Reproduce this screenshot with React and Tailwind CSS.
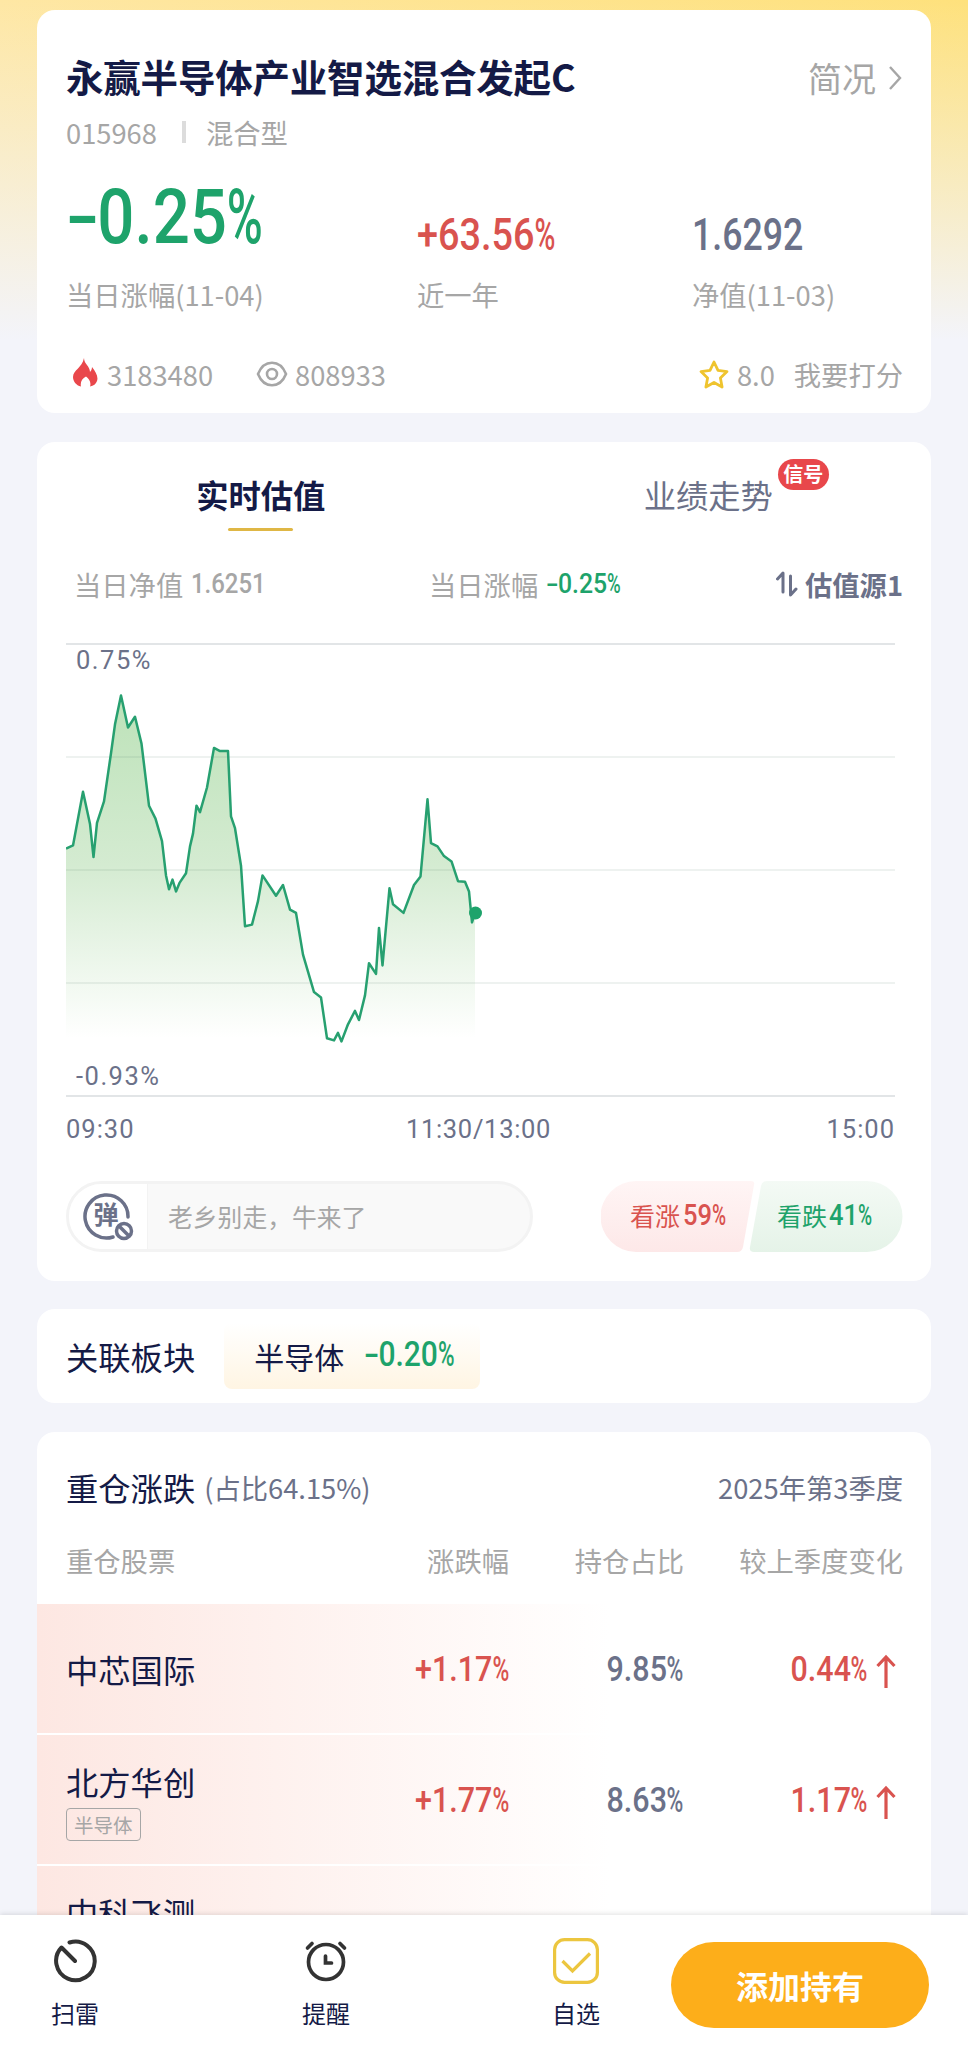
const line = [
  [0, 205.6], [7, 202.4], [17, 148.8], [24, 180.9], [27.5, 214.1], [31, 179.9], [38, 158.4], [45, 110.2], [49, 81.3],
  [55, 52.4], [62, 84.5], [69, 73.8], [75.5, 100.6], [83, 162.7], [89.5, 175.6], [96, 198.1], [100, 232.4],
  [103, 246.3], [106.5, 236.6], [110, 248.4], [113.5, 239.9], [120, 230.2], [124, 203.4], [127, 190.6],
  [130.5, 162.7], [134, 169.1], [141, 144.5], [148, 104.9], [154, 108.1], [162, 108.1], [165, 173.4], [169, 185.2],
  [175, 222.7], [179, 283.2], [186, 281.6], [192, 258.1], [196.5, 232.4], [210, 252.7], [217, 242], [224, 266.6],
  [230, 269.9], [237, 311.6], [248, 349.1], [255, 354.5], [261, 395.2], [268, 397.4], [272, 389.9], [275.5, 398.4],
  [282, 381.3], [289, 367.9], [293, 377], [299, 352.4], [303, 320.2], [310, 330.9], [313, 284.9], [316.5, 322.4],
  [323.5, 245.2], [327, 261.3], [337.5, 269.9], [348, 242], [354.5, 233.4], [361.5, 156.3], [365, 200.2],
  [371.5, 203.4], [378, 213.1], [385.5, 218.4], [392, 238.2], [399, 238.8], [403, 248.4], [406, 279.5], [409, 269.9],
];

const points = line.map(p => p.join(',')).join(' ');

const stocks = [
  { name: '中芯国际', change: '+1.17%', share: '9.85%', diff: '0.44%' },
  { name: '北方华创', tag: '半导体', change: '+1.77%', share: '8.63%', diff: '1.17%' },
  { name: '中科飞测' },
];

// condensed figures: wide minus sign, narrow percent sign
function Num({ className = '', children }) {
  const minus = children.startsWith('-');
  const percent = children.endsWith('%');
  return (
    <span className={`inline-block whitespace-nowrap font-['Roboto','Noto_Sans_CJK_SC',sans-serif] font-medium ${className}`}>
      {minus && <span className="mr-[0.14em] inline-block origin-left scale-x-150">-</span>}
      {children.slice(minus ? 1 : 0, percent ? -1 : undefined)}
      {percent && <span className="mr-[-0.18em] inline-block origin-left scale-x-75">%</span>}
    </span>
  );
}

function ArrowUp() {
  return (
    <svg width="20" height="34" viewBox="0 0 20 34" fill="none" stroke="#d9534f" strokeWidth="3.2">
      <path d="M10 34V3M1.500 12L10 3L18.500 12" />
    </svg>
  );
}

function Summary() {
  return (
    <section className="h-[403px] rounded-[18px] bg-white pt-[39px] pr-7 pl-[29px]">
      <div className="flex h-[58px] items-center justify-between">
        <h1 className="pb-1 text-[37.5px] font-bold tracking-[-0.2px] text-[#141a46]">永赢半导体产业智选混合发起C</h1>
        <div className="flex items-center gap-3 pb-px text-[34px] text-[#a6a6a6]">
          简况
          <svg width="15" height="26" viewBox="0 0 15 26" fill="none" stroke="currentColor" strokeWidth="2.4">
            <path d="M2 2l10 11L2 24" />
          </svg>
        </div>
      </div>
      <div className="flex h-[50px] items-center text-[27.3px] text-[#a6a6a6]">
        015968
        <span className="mr-5 ml-[25px] h-[22px] w-1 bg-[#dcdcdc]" />
        混合型
      </div>
      <div className="grid grid-cols-[351px_275px_1fr]">
        <div>
          <div className="flex h-[112px] items-end">
            <Num className="mb-[3px] origin-left scale-x-[0.86] text-[76px] leading-[98px] text-[#1ea36b]">-0.25%</Num>
          </div>
          <div className="text-[27.3px] leading-[50px] text-[#a6a6a6]">当日涨幅(11-04)</div>
        </div>
        <div>
          <div className="flex h-[112px] items-end">
            <Num className="origin-left scale-x-[0.87] text-[43.5px] leading-[66px] text-[#d9534f]">+63.56%</Num>
          </div>
          <div className="text-[27.3px] leading-[50px] text-[#a6a6a6]">近一年</div>
        </div>
        <div>
          <div className="flex h-[112px] items-end">
            <Num className="origin-left scale-x-[0.82] text-[43.5px] leading-[66px] text-[#6b7189]">1.6292</Num>
          </div>
          <div className="text-[27.3px] leading-[50px] text-[#a6a6a6]">净值(11-03)</div>
        </div>
      </div>
      <div className="mt-[35px] flex h-10 items-center text-[27.3px] text-[#a6a6a6]">
        <svg className="mr-[9px] mb-1 ml-[7px]" width="25" height="29" viewBox="0 0 25 29" fill="#e9474b">
          <path d="M11 0c0 6 6 8 6 14 1-1 2-3 2-5 4 5 6.500 10 5 14-1 3-3.500 5-7 5.500 1.500-4-1-8-4-10-4 2-6 6-5 10C3 27.500 0 23 0 19 0 12 9 10 11 0z" />
        </svg>
        <span>3183480</span>
        <svg className="mr-[7px] ml-[43px]" width="32" height="26" viewBox="0 0 32 26" fill="none" stroke="#a6a6a6" strokeWidth="2.6">
          <path d="M2 13C8-2 24-2 30 13C24 28 8 28 2 13z" />
          <circle cx="16" cy="13" r="5" />
        </svg>
        <span>808933</span>
        <svg className="mr-2 ml-auto" width="30" height="29" viewBox="0 0 30 29" fill="none" stroke="#efc42e" strokeWidth="2.8" strokeLinejoin="round">
          <path d="M15 2l4 8.400 9 1.200-6.600 6.300 1.700 9.100L15 22.500 6.900 27l1.700-9.100L2 11.600l9-1.200z" />
        </svg>
        <span>8.0</span>
        <span className="ml-[19px]">我要打分</span>
      </div>
    </section>
  );
}

function Chart() {
  return (
    <svg className="block" width="845" height="454" viewBox="0 0 845 454" fill="none">
      <defs>
        <linearGradient id="area" x1="0" y1="48" x2="0" y2="395" gradientUnits="userSpaceOnUse">
          <stop offset="0" stopColor="#bce2b8" />
          <stop offset="0.500" stopColor="#d4ebd1" />
          <stop offset="1" stopColor="#d4ebd1" stopOpacity="0" />
        </linearGradient>
      </defs>
      <polygon points={`0,395 ${points} 409,395`} fill="url(#area)" />
      <path d="M0 1H829M0 453H829" stroke="#e2e5e7" strokeWidth="2" />
      <path d="M0 114H829M0 227H829M0 340H829" stroke="#5a8070" strokeOpacity="0.1" strokeWidth="2" />
      <polyline points={points} stroke="#27a070" strokeWidth="2.500" strokeLinejoin="round" />
      <circle cx="409.500" cy="270" r="6.500" fill="#1ea36b" />
      <g fill="#6b7189" fontFamily="Roboto, sans-serif" fontSize="25.500" letterSpacing="1.500">
        <text x="10" y="26">0.75%</text>
        <text x="10" y="442">-0.93%</text>
      </g>
    </svg>
  );
}

function Valuation() {
  return (
    <section className="mt-[29px] h-[839px] rounded-[18px] bg-white pt-[22px] pr-7 pl-[29px]">
      <div className="grid h-[75px] grid-cols-2 text-[32.3px]">
        <div className="flex flex-col items-center pr-[29px]">
          <span className="leading-[60px] font-bold text-[#141a46]">实时估值</span>
          <span className="mt-[4px] h-[3px] w-[65px] shrink-0 rounded-full bg-[#dfb745]" />
        </div>
        <div className="flex justify-center pl-[29px] text-[#6b7189]">
          <div className="relative leading-[60px]">
            业绩走势
            <span className="absolute top-[-5px] left-[134px] h-[31px] w-[51px] rounded-full bg-[#e8474b] text-center text-[20px] leading-[30px] font-bold text-white">
              信号
            </span>
          </div>
        </div>
      </div>
      <div className="mt-[25px] flex h-10 items-center text-[27.3px] text-[#a6a6a6]">
        <div className="flex w-[363px] shrink-0 items-center pl-2">
          当日净值
          <Num className="ml-2 origin-left scale-x-[0.84] text-[28.5px]">1.6251</Num>
        </div>
        <div className="flex shrink-0 items-center">
          当日涨幅
          <Num className="ml-2 origin-left scale-x-[0.87] text-[28.5px] text-[#1ea36b]">-0.25%</Num>
        </div>
        <div className="ml-auto flex shrink-0 items-center gap-[7px] font-bold text-[#6b7189]">
          <svg width="22" height="28" viewBox="0 0 22 28" fill="none" stroke="currentColor" strokeWidth="3" strokeLinecap="round" strokeLinejoin="round">
            <path d="M1.500 9l5.500-6v19M14.500 6v19l5.500-6" />
          </svg>
          估值源1
        </div>
      </div>
      <div className="mt-[39px]">
        <Chart />
      </div>
      <div className="mt-[14px] flex h-9 w-[829px] items-center justify-between font-['Roboto',sans-serif] text-[25.5px] text-[#6b7189]">
        <span className="tracking-[1px]">09:30</span>
        <span className="mr-1 tracking-[0.7px]">11:30/13:00</span>
        <span className="tracking-[1px]">15:00</span>
      </div>
      <div className="mt-[34px] flex h-[71px] justify-between">
        <div className="flex w-[467px] overflow-hidden rounded-full border-[3px] border-[#f3f3f3] bg-[#f9f9f9]">
          <div className="flex w-[79px] items-center justify-center border-r border-[#f3f3f3] bg-white">
            <svg width="52" height="48" viewBox="0 0 52 48" fill="none" stroke="#6b7189" strokeWidth="3.500">
              <path d="M46 24A21.500 21.500 0 1 0 31 44" strokeLinecap="round" />
              <text x="24" y="31" textAnchor="middle" fill="#6b7189" stroke="none" fontSize="25" fontWeight="700" fontFamily="Noto Sans CJK SC">弹</text>
              <circle cx="42" cy="38" r="7.500" fill="#fff" />
              <path d="M37 33l10 10" />
            </svg>
          </div>
          <span className="pl-5 text-[24.8px] leading-[65px] text-[#a6a6a6]">老乡别走，牛来了</span>
        </div>
        <div className="relative flex w-[302px]">
          <svg className="absolute inset-0" width="302" height="71" viewBox="0 0 302 71">
            <defs>
              <linearGradient id="up" x1="0" y1="0" x2="0" y2="1">
                <stop offset="0" stopColor="#fff5f5" />
                <stop offset="1" stopColor="#fde8e8" />
              </linearGradient>
              <linearGradient id="down" x1="0" y1="0" x2="0" y2="1">
                <stop offset="0" stopColor="#f4faf5" />
                <stop offset="1" stopColor="#e5f3e8" />
              </linearGradient>
            </defs>
            <path d="M35 0H150Q154 0 153 4L142 66Q141 71 136 71H35A35.500 35.500 0 0 1 35 0z" fill="url(#up)" />
            <path d="M166 0H266A35.500 35.500 0 0 1 266 71H153Q148 71 149 66L160 5Q161 0 166 0z" fill="url(#down)" />
          </svg>
          <div className="relative flex h-[70px] items-center pl-[29px] text-[25px] text-[#d9534f]">
            看涨<Num className="mb-px ml-[3px] origin-left scale-x-[0.88] text-[29px]">59%</Num>
          </div>
          <div className="absolute left-[176px] flex h-[70px] items-center text-[25px] text-[#1ea36b]">
            看跌<Num className="mb-px ml-[2px] origin-left scale-x-[0.88] text-[29px]">41%</Num>
          </div>
        </div>
      </div>
    </section>
  );
}

function Sector() {
  return (
    <section className="mt-7 flex h-[94px] items-center rounded-[18px] bg-white px-[29px] text-[#141a46]">
      <span className="pt-px text-[32.3px]">关联板块</span>
      <div className="ml-[29px] flex h-[66px] w-[256px] items-center rounded-lg bg-gradient-to-b from-white to-[#fff5e3] pl-[30px] text-[30px]">
        半导体
        <Num className="mb-[3px] ml-5 origin-left scale-x-[0.87] text-[34.5px] text-[#1ea36b]">-0.20%</Num>
      </div>
    </section>
  );
}

function Holdings() {
  return (
    <section className="mt-[29px] h-[600px] rounded-t-[18px] bg-white pt-[30px]">
      <div className="flex h-[50px] items-center pr-7 pl-[29px] text-[27.3px] text-[#6b7189]">
        <span className="text-[32.3px] text-[#141a46]">重仓涨跌</span>
        <span className="ml-[9px]">(占比64.15%)</span>
        <span className="ml-auto">2025年第3季度</span>
      </div>
      <div className="mt-[25px] grid h-[46px] grid-cols-[1fr_175px_175px_219px] items-center pr-7 pl-[29px] text-right text-[27.3px] text-[#a6a6a6]">
        <span className="text-left">重仓股票</span>
        <span>涨跌幅</span>
        <span>持仓占比</span>
        <span>较上季度变化</span>
      </div>
      <div className="mt-[21px]">
        {stocks.map(s => (
          <div
            key={s.name}
            className="mb-[2px] grid h-[129px] grid-cols-[1fr_175px_175px_219px] items-center bg-gradient-to-r from-[#fde7e2] to-white to-[64%] pr-7 pl-[29px] text-right"
          >
            <div className={`flex flex-col items-start ${s.change ? '' : 'self-start pt-[23px]'}`}>
              <span className="text-[32.3px] leading-[46px] text-[#141a46]">{s.name}</span>
              {s.tag && (
                <span className="mt-1 rounded border border-[#a6a6a6] px-[7px] text-[19.5px] leading-[31px] text-[#a6a6a6]">{s.tag}</span>
              )}
            </div>
            {s.change && (
              <>
                <div className="pt-1">
                  <Num className="origin-right scale-x-[0.87] text-[35px] text-[#d9534f]">{s.change}</Num>
                </div>
                <div className="pt-1">
                  <Num className="origin-right scale-x-[0.87] text-[35px] text-[#6b7189]">{s.share}</Num>
                </div>
                <div className="flex items-center justify-end gap-2 pt-1 pr-[7px]">
                  <Num className="origin-right scale-x-[0.87] text-[35px] text-[#d9534f]">{s.diff}</Num>
                  <ArrowUp />
                </div>
              </>
            )}
          </div>
        ))}
      </div>
    </section>
  );
}

function TabBar() {
  return (
    <nav className="relative flex h-[139px] shrink-0 bg-white text-[24px] text-[#141a46] shadow-[0_-1px_5px_rgba(0,0,0,0.12)]">
      <div className="flex w-[150px] flex-col items-center gap-[11px] pt-[23px]">
        <svg width="46" height="46" viewBox="0 0 46 46" fill="none" stroke="#333" strokeWidth="4" strokeLinecap="round">
          <path d="M17.500 4.500A19.300 19.300 0 1 1 9.500 9.500L23 23" strokeLinejoin="round" />
        </svg>
        <span className="leading-9">扫雷</span>
      </div>
      <div className="flex w-[352px] flex-col items-center gap-[11px] pt-[23px]">
        <svg width="46" height="46" viewBox="0 0 46 46" fill="none" stroke="#333" strokeWidth="3.700" strokeLinecap="round">
          <circle cx="23" cy="24" r="17.500" />
          <path d="M22.500 18v7h6M4.500 10l4.500-4.500M41.500 10L37 5.500" />
        </svg>
        <span className="leading-9">提醒</span>
      </div>
      <div className="flex w-[148px] flex-col items-center gap-[11px] pt-[23px]">
        <svg width="46" height="46" viewBox="0 0 46 46" fill="none" stroke="#ecc63f" strokeWidth="3.200">
          <rect x="1.600" y="1.600" width="42.800" height="42.800" rx="10" />
          <path d="M9.500 23l10 10L37 15.500" />
        </svg>
        <span className="leading-9">自选</span>
      </div>
      <button className="mt-[27px] ml-[21px] h-[86px] w-[258px] rounded-full bg-[#fdae1a] text-[32px] font-bold text-white">添加持有</button>
    </nav>
  );
}

export default function App() {
  return (
    <div className="flex h-[2054px] w-[968px] flex-col overflow-hidden bg-[#f3f4fa] font-['Noto_Sans_CJK_SC',sans-serif]">
      <main className="h-[1915px] shrink-0 overflow-hidden bg-[linear-gradient(to_bottom,rgba(243,244,250,0),#f3f4fa_340px),linear-gradient(to_right,#fee7a4,#fee17c)] px-[37px] pt-[10px]">
        <Summary />
        <Valuation />
        <Sector />
        <Holdings />
      </main>
      <TabBar />
    </div>
  );
}
